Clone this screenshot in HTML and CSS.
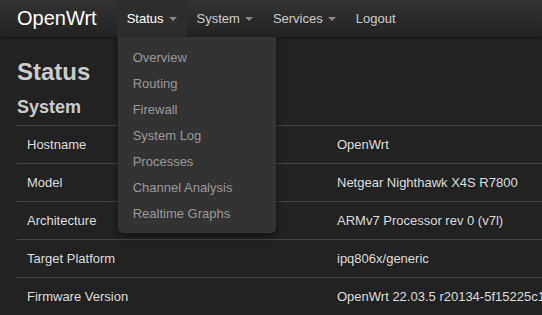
FILE: index.html
```html
<!DOCTYPE html>
<html lang="en">
<head>
  <meta charset="UTF-8">
  <title>OpenWrt - Status</title>
  <link rel="stylesheet" href="styles.css">
</head>
<body>
  <header class="navbar">
    <a class="brand" href="#">OpenWrt</a>
    <ul class="nav">
      <li class="dropdown open">
        <a href="#">Status <span class="caret"></span></a>
        <ul class="dropdown-menu">
          <li><a href="#">Overview</a></li>
          <li><a href="#">Routing</a></li>
          <li><a href="#">Firewall</a></li>
          <li><a href="#">System Log</a></li>
          <li><a href="#">Processes</a></li>
          <li><a href="#">Channel Analysis</a></li>
          <li><a href="#">Realtime Graphs</a></li>
        </ul>
      </li>
      <li class="dropdown"><a href="#">System <span class="caret"></span></a></li>
      <li class="dropdown"><a href="#">Services <span class="caret"></span></a></li>
      <li><a href="#">Logout</a></li>
    </ul>
  </header>

  <main class="container">
    <h2>Status</h2>
    <h3>System</h3>
    <table class="table">
      <tr><td class="label">Hostname</td><td>OpenWrt</td></tr>
      <tr><td class="label">Model</td><td>Netgear Nighthawk X4S R7800</td></tr>
      <tr><td class="label">Architecture</td><td>ARMv7 Processor rev 0 (v7l)</td></tr>
      <tr><td class="label">Target Platform</td><td>ipq806x/generic</td></tr>
      <tr><td class="label">Firmware Version</td><td>OpenWrt 22.03.5 r20134-5f15225c1e</td></tr>
    </table>
  </main>
</body>
</html>
```

FILE: styles.css
```css
body {
  margin: 0;
  background: #222;
  color: #ddd;
  font-family: "Liberation Sans", Arial, sans-serif;
  font-size: 13px;
  overflow: hidden;
}
a {
  text-decoration: none;
  color: inherit;
}
.navbar {
  display: flex;
  align-items: stretch;
  height: 37px;
  background: linear-gradient(#333, #222);
  box-shadow: 0 1px 3px rgba(0, 0, 0, 0.4);
  position: relative;
  z-index: 2;
}
.brand {
  display: flex;
  align-items: center;
  padding: 0 20px 0 17px;
  font-size: 20px;
  color: #fff;
}
.nav {
  display: flex;
  list-style: none;
  margin: 0;
  padding: 0;
}
.nav > li {
  position: relative;
  display: flex;
}
.nav > li > a {
  display: flex;
  align-items: center;
  padding: 0 10px;
  color: #ccc;
}
.nav > li.open > a {
  background: #2e2e2e;
  color: #fff;
}
.caret {
  display: inline-block;
  margin-left: 5px;
  margin-top: 1px;
  border-top: 4px solid #888;
  border-left: 4px solid transparent;
  border-right: 4px solid transparent;
}
.dropdown-menu {
  position: absolute;
  top: 100%;
  left: 1px;
  width: 158px;
  margin: 0;
  padding: 8px 0 6px;
  list-style: none;
  background: #333;
  border-radius: 0 0 5px 5px;
  box-shadow: 0 3px 8px rgba(0, 0, 0, 0.5);
}
.dropdown-menu a {
  display: block;
  padding: 0 15px;
  line-height: 26px;
  color: #999;
  white-space: nowrap;
}
.container {
  padding: 0 17px;
}
h2 {
  margin: 21px 0 0;
  font-size: 24px;
  line-height: 28px;
  color: #ccc;
}
h3 {
  margin: 10px 0 0;
  font-size: 18px;
  line-height: 22px;
  color: #ccc;
}
.table {
  margin-top: 7px;
  width: 700px;
  border-collapse: collapse;
}
.table td {
  border-top: 1px solid #444;
  height: 37px;
  padding: 0 10px;
  white-space: nowrap;
}
.table td.label {
  width: 290px;
}
```
